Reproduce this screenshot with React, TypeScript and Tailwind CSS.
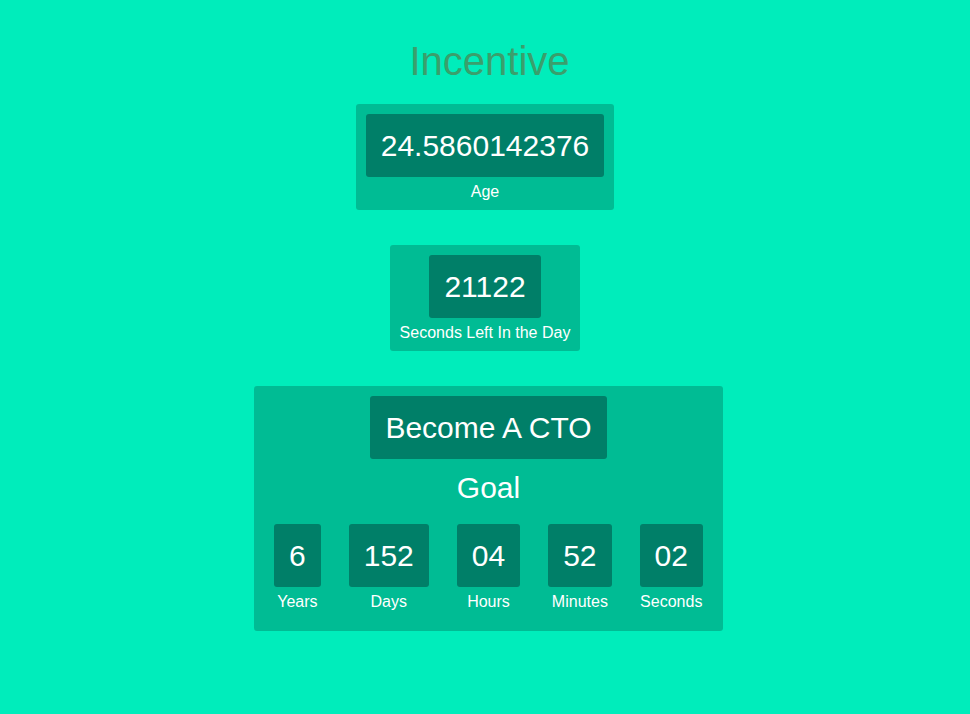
const COUNTDOWN = [
  { value: '6', label: 'Years' },
  { value: '152', label: 'Days' },
  { value: '04', label: 'Hours' },
  { value: '52', label: 'Minutes' },
  { value: '02', label: 'Seconds' },
];

function Stat({ value, label }: { value: string; label: string }) {
  return (
    <div className="flex flex-col items-center rounded-[3px] bg-[#00bc94] px-[10px] pt-[10px] pb-[9px]">
      <div className="rounded-[3px] bg-[#007f68] px-[15px] py-[14px] text-[30px] leading-[35px] text-white">
        {value}
      </div>
      <div className="mt-[6px] text-[16px] leading-[18px] text-white">{label}</div>
    </div>
  );
}

export default function App() {
  return (
    <div
      className="flex min-h-[714px] w-full flex-col items-center bg-[#00edbb] pt-[38px]"
      style={{ fontFamily: '"Liberation Sans", Arial, sans-serif' }}
    >
      <h1 className="ml-[9px] text-[40px] leading-[46px] text-[#3a9f6c]">Incentive</h1>

      <div className="mt-[20px] flex flex-col items-center gap-[35px]">
        <Stat value="24.5860142376" label="Age" />
        <Stat value="21122" label="Seconds Left In the Day" />

        {/* Goal countdown */}
        <div className="ml-[7px] flex flex-col items-center rounded-[3px] bg-[#00bc94] px-5 pt-[10px] pb-[20px]">
          <div className="rounded-[3px] bg-[#007f68] px-[15px] py-[14px] text-[30px] leading-[35px] text-white">
            Become A CTO
          </div>
          <div className="mt-[11px] text-[30px] leading-[35px] text-white">Goal</div>
          <div className="mt-[19px] flex gap-[28px]">
            {COUNTDOWN.map((c) => (
              <div key={c.label} className="flex flex-col items-center">
                <div className="rounded-[3px] bg-[#007f68] px-[15px] py-[14px] text-[30px] leading-[35px] text-white">
                  {c.value}
                </div>
                <div className="mt-[6px] text-[16px] leading-[18px] text-white">{c.label}</div>
              </div>
            ))}
          </div>
        </div>
      </div>
    </div>
  );
}
